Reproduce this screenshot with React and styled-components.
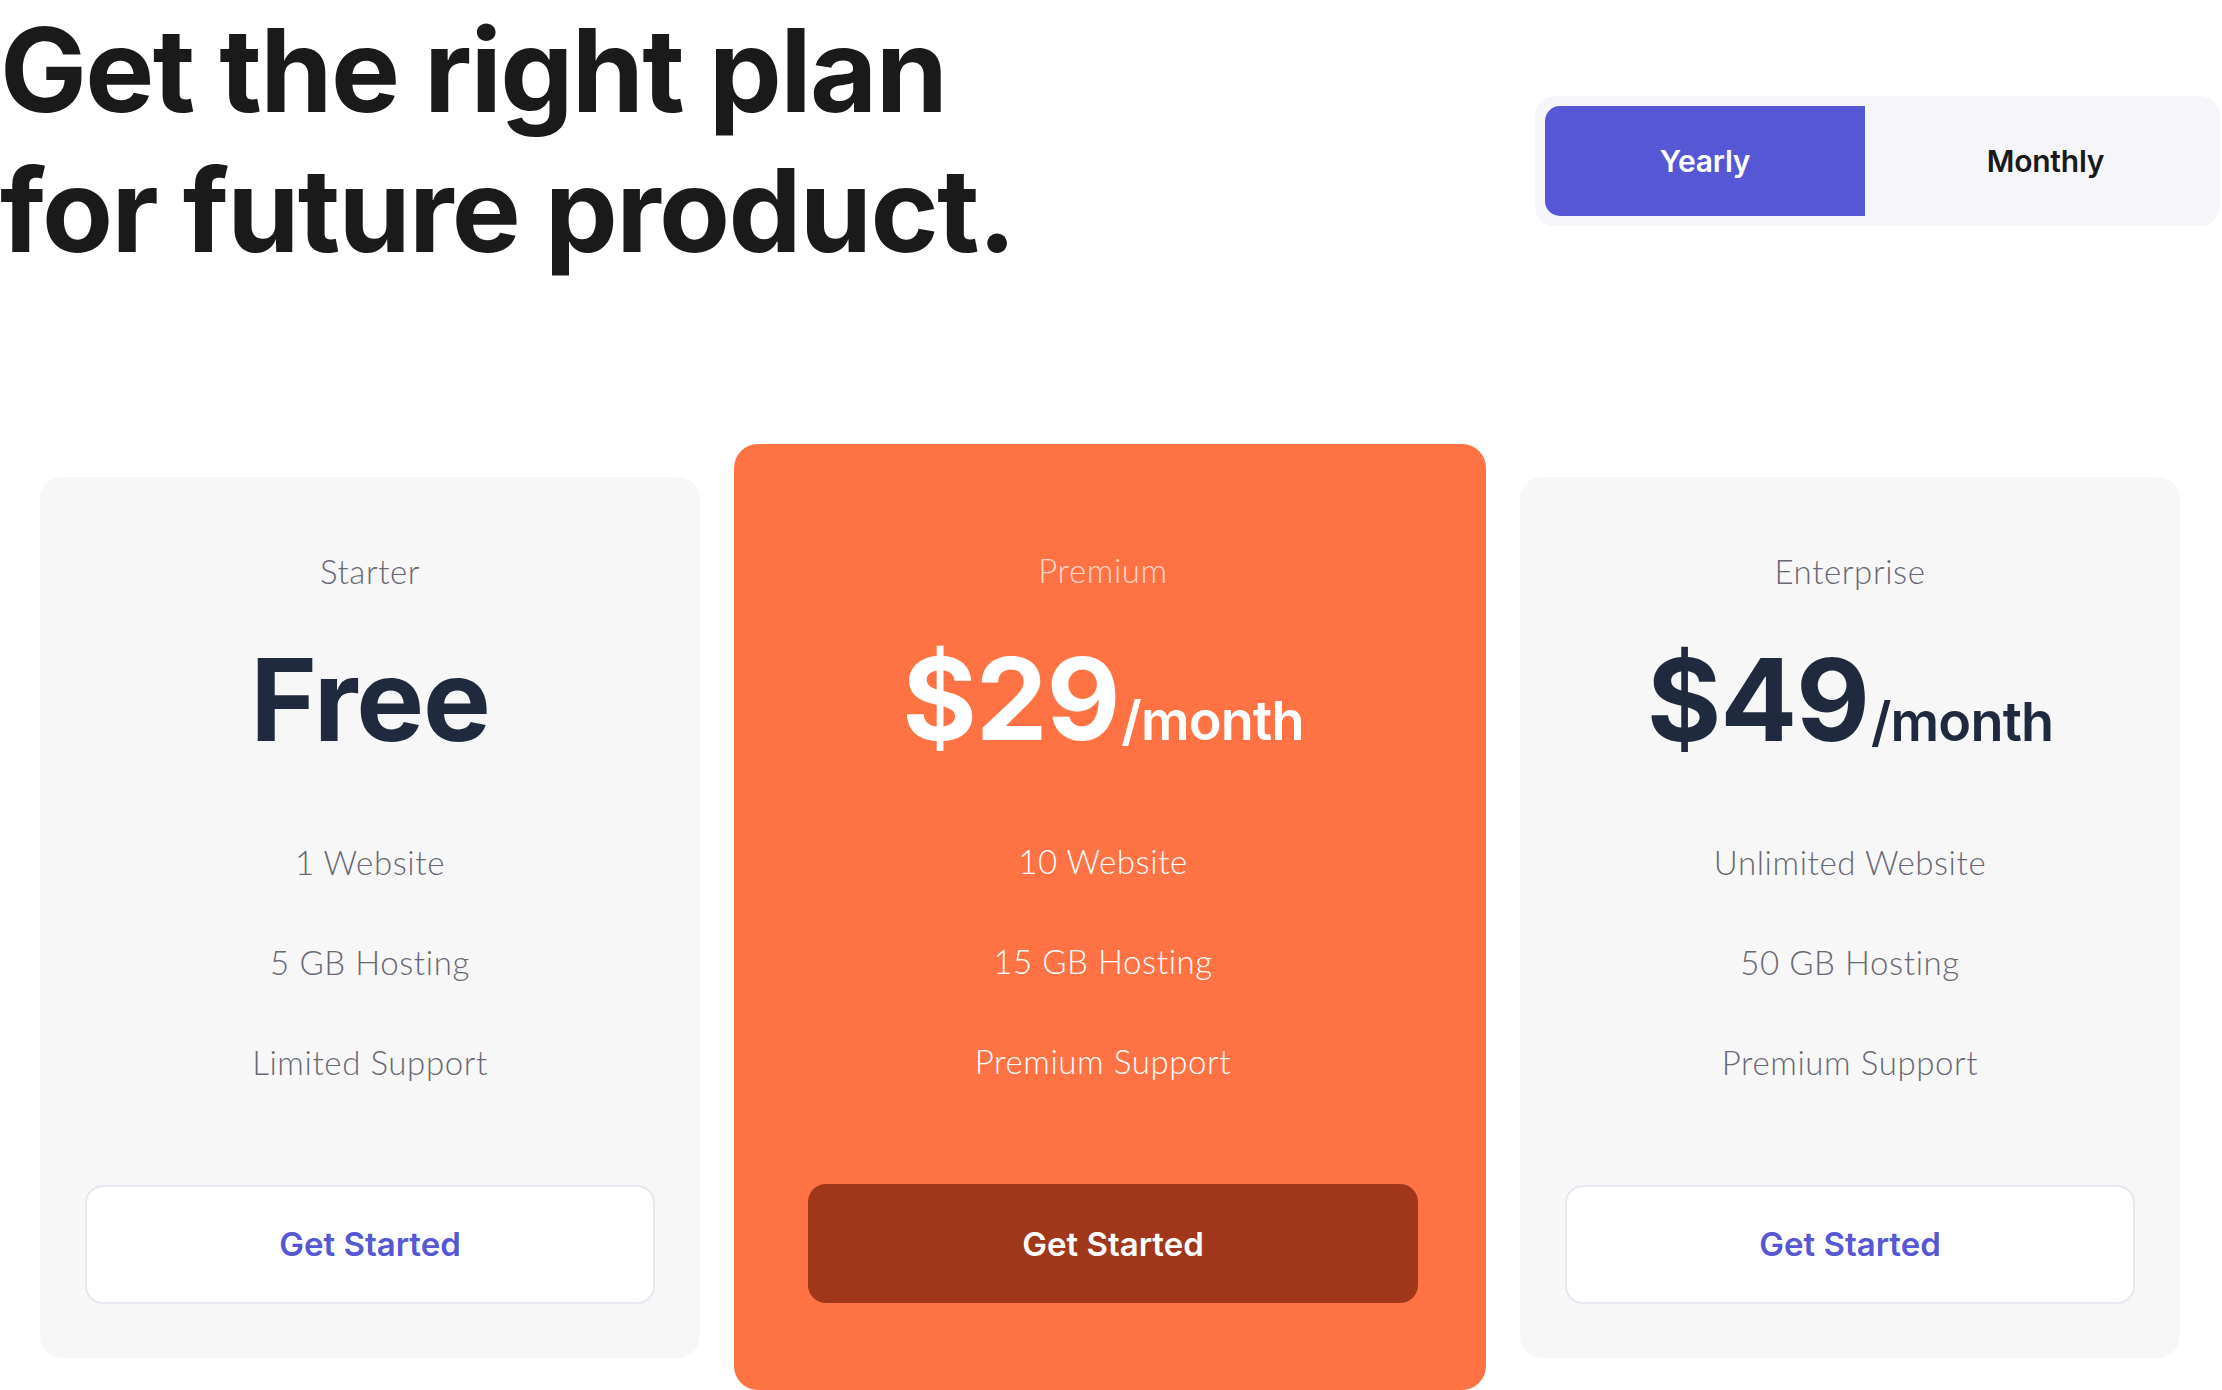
import React from 'react';
import styled, { createGlobalStyle } from 'styled-components';

const colors = {
    ink: '#1a1a1a',
    navy: '#1f2a3f',
    gray: '#686874',
    indigo: '#5557d5',
    soft: '#f6f6fa',
    card: '#f7f7f7',
    orange: '#ff7244',
    rust: '#a0371a',
    line: '#e7e7f1',
};

const GlobalStyle = createGlobalStyle`
    * { box-sizing: border-box; }
    html, body { margin: 0; padding: 0; background: #ffffff; }
    body {
        font-family: Inter, "Liberation Sans", sans-serif;
        color: ${colors.ink};
        overflow: hidden;
    }
`;

const Page = styled.div`
    width: 2222px;
    height: 1390px;
    display: flex;
    flex-direction: column;
`;

const Header = styled.header`
    display: flex;
    justify-content: space-between;
    align-items: flex-start;
`;

const Title = styled.h1`
    margin: 0;
    font-family: Inter, "Liberation Sans", sans-serif;
    font-size: 116px;
    line-height: 140px;
    font-weight: 700;
    letter-spacing: -1.7px;
    color: ${colors.ink};
`;

const Toggle = styled.div`
    margin-top: 96px;
    margin-right: 2px;
    width: 685px;
    height: 130px;
    padding: 10px;
    display: flex;
    background: ${colors.soft};
    border-radius: 20px;
`;

const ToggleButton = styled.button`
    flex: ${(props) => props.active ? '0 0 320px' : '1'};
    padding: ${(props) => props.active ? '0' : '0 0 0 16px'};
    border: none;
    border-radius: ${(props) => props.active ? '15px 0 0 15px' : '0'};
    background: ${(props) => props.active ? colors.indigo : 'transparent'};
    color: ${(props) => props.active ? '#ffffff' : colors.ink};
    font-family: Inter, "Liberation Sans", sans-serif;
    font-size: 30px;
    font-weight: 600;
    letter-spacing: -0.2px;
    cursor: pointer;
`;

const Cards = styled.main`
    margin-top: 164px;
    margin-left: 40px;
    display: grid;
    grid-template-columns: 660px 752px 660px;
    column-gap: 34px;
    align-items: center;
`;

const Card = styled.section`
    display: flex;
    flex-direction: column;
    align-items: center;
    background: ${(props) => props.featured ? colors.orange : colors.card};
    border-radius: ${(props) => props.featured ? '24px' : '22px'};
    padding: ${(props) => props.featured ? '106px 78px 87px 64px' : '74px 45px 54px'};
`;

const PlanName = styled.span`
    font-family: Lato, "Open Sans", sans-serif;
    font-size: 33px;
    line-height: 40px;
    font-weight: 300;
    letter-spacing: 0.6px;
    color: ${(props) => props.featured ? 'rgba(255,255,255,0.72)' : colors.gray};
`;

const Price = styled.div`
    margin-top: 52px;
    display: flex;
    align-items: baseline;
    height: 114px;
    line-height: 114px;
    color: ${(props) => props.featured ? '#ffffff' : colors.navy};
`;

const Amount = styled.span`
    font-family: Inter, "Liberation Sans", sans-serif;
    font-size: 114px;
    font-weight: 700;
    letter-spacing: -1.2px;
`;

const Period = styled.span`
    font-family: Inter, "Liberation Sans", sans-serif;
    font-size: 54px;
    font-weight: 600;
    letter-spacing: -0.8px;
    margin-left: 2px;
`;

const Features = styled.ul`
    list-style: none;
    margin: 85px 0 0;
    padding: 0;
    display: flex;
    flex-direction: column;
    align-items: center;
    gap: 60px;
`;

const Feature = styled.li`
    font-family: Lato, "Open Sans", sans-serif;
    font-size: 33px;
    line-height: 40px;
    font-weight: 300;
    letter-spacing: 0.6px;
    color: ${(props) => props.featured ? '#ffffff' : colors.gray};
`;

const StartButton = styled.button`
    margin-top: 103px;
    margin-left: ${(props) => props.featured ? '10px' : '0'};
    align-self: ${(props) => props.featured ? 'flex-start' : 'center'};
    width: 100%;
    height: 119px;
    border-radius: 18px;
    border: ${(props) => props.featured ? 'none' : `2px solid ${colors.line}`};
    background: ${(props) => props.featured ? colors.rust : '#ffffff'};
    color: ${(props) => props.featured ? '#ffffff' : colors.indigo};
    font-family: Inter, "Liberation Sans", sans-serif;
    font-size: 33px;
    font-weight: 600;
    letter-spacing: 0px;
    cursor: pointer;
`;

const plans = [
    { name: 'Starter', amount: 'Free', features: ['1 Website', '5 GB Hosting', 'Limited Support'] },
    { name: 'Premium', amount: '$29', period: '/month', featured: true, features: ['10 Website', '15 GB Hosting', 'Premium Support'] },
    { name: 'Enterprise', amount: '$49', period: '/month', features: ['Unlimited Website', '50 GB Hosting', 'Premium Support'] },
];

const App = () => {
    return (
        <Page>
            <GlobalStyle />
            <Header>
                <Title>Get the right plan<br />for future product.</Title>
                <Toggle>
                    <ToggleButton active>Yearly</ToggleButton>
                    <ToggleButton>Monthly</ToggleButton>
                </Toggle>
            </Header>
            <Cards>
                {plans.map((plan) => (
                    <Card key={plan.name} featured={plan.featured}>
                        <PlanName featured={plan.featured}>{plan.name}</PlanName>
                        <Price featured={plan.featured}>
                            <Amount>{plan.amount}</Amount>
                            {plan.period && <Period>{plan.period}</Period>}
                        </Price>
                        <Features>
                            {plan.features.map((item) => (
                                <Feature key={item} featured={plan.featured}>{item}</Feature>
                            ))}
                        </Features>
                        <StartButton featured={plan.featured}>Get Started</StartButton>
                    </Card>
                ))}
            </Cards>
        </Page>
    );
};

export default App;
